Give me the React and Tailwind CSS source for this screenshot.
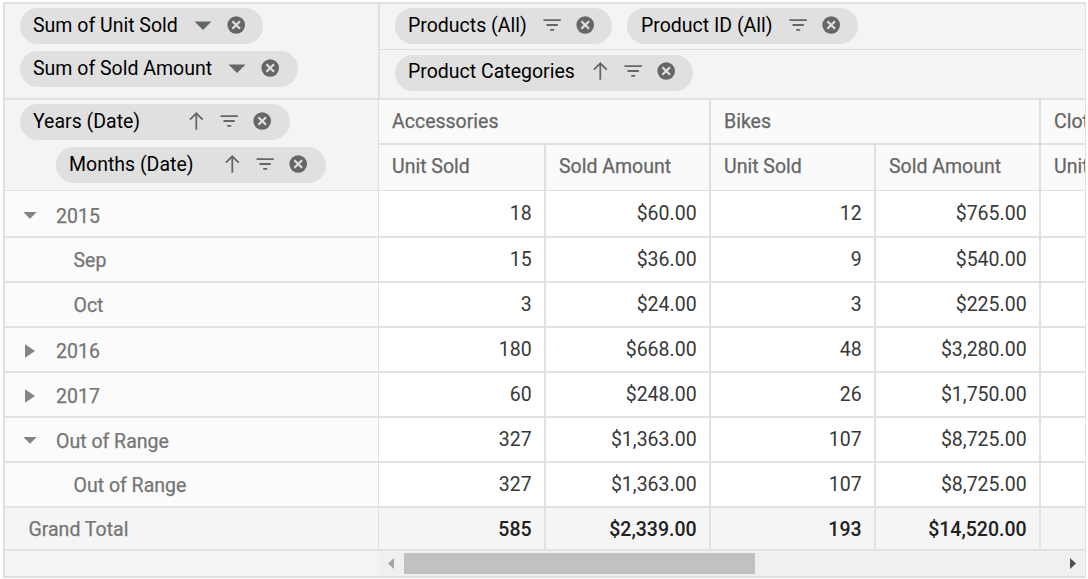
import React from 'react';
import clsx from 'clsx';

const rows = [
  { label: '2015', state: 'open', height: 'h-[47px]', pad: 'pt-[6px]', values: ['18', '$60.00', '12', '$765.00'] },
  { label: 'Sep', child: true, height: 'h-[45px]', pad: 'pt-0.5', values: ['15', '$36.00', '9', '$540.00'] },
  { label: 'Oct', child: true, height: 'h-[45px]', pad: 'pt-0.5', values: ['3', '$24.00', '3', '$225.00'] },
  { label: '2016', state: 'closed', height: 'h-[45px]', pad: 'pt-1', values: ['180', '$668.00', '48', '$3,280.00'] },
  { label: '2017', state: 'closed', height: 'h-[45px]', pad: 'pt-1', values: ['60', '$248.00', '26', '$1,750.00'] },
  { label: 'Out of Range', state: 'open', height: 'h-[45px]', pad: 'pt-1', values: ['327', '$1,363.00', '107', '$8,725.00'] },
  { label: 'Out of Range', child: true, height: 'h-[45px]', pad: 'pt-0.5', values: ['327', '$1,363.00', '107', '$8,725.00'] },
  { label: 'Grand Total', total: true, height: 'h-[43px]', pad: 'pt-0.5', values: ['585', '$2,339.00', '193', '$14,520.00'] },
];

const columnWidths = ['w-[167px]', 'w-[165px]', 'w-[165px]', 'w-[165px]'];

function Icon({ name }) {
  return (
    <svg width="18" height="18" viewBox="0 0 18 18" className="shrink-0 text-[#666666]" fill="currentColor">
      {name === 'dropdown' && <path d="M0.5 5.5h17L9 14z" />}
      {name === 'filter' && <path d="M0.5 3.2h17.3v1.9H0.5zM3.5 8.1h11.3v1.8H3.5zM7.2 13h4v1.8h-4z" />}
      {name === 'sort' && (
        <path d="M9.3 1.3v16.4M2.9 7.6l6.4-6.3 6.4 6.3" fill="none" stroke="currentColor" strokeWidth="1.8" />
      )}
      {name === 'remove' && (
        <>
          <circle cx="9.2" cy="9" r="8.8" />
          <path d="M5.4 5.2l7.6 7.6M13 5.2l-7.6 7.6" stroke="#e0e0e0" strokeWidth="2.2" />
        </>
      )}
    </svg>
  );
}

function Chip({ label, icons, className }) {
  return (
    <div className={clsx('flex h-9 shrink-0 items-center justify-between rounded-full bg-[#e0e0e0] text-black', className)}>
      <span className="pt-0.5">{label}</span>
      <span className="flex gap-[15px]">
        {icons.map((name) => (
          <Icon key={name} name={name} />
        ))}
      </span>
    </div>
  );
}

function Toggle({ state }) {
  return (
    <svg width="14" height="14" viewBox="0 0 14 14" className="mb-0.5 mr-[19px] shrink-0" fill="#848484">
      {state === 'open' ? <path d="M0.3 3h13.4L7 9.8z" /> : <path d="M2 0.3v13.4L12 7z" />}
    </svg>
  );
}

function HeaderCell({ children, className }) {
  return (
    <div className={clsx('flex shrink-0 items-center overflow-hidden border-[#e0e0e0] pl-[13px] text-[#666666] [-webkit-text-stroke:0.25px]', className)}>
      {children}
    </div>
  );
}

export default function App() {
  return (
    <div className="h-[579px] w-[1088px] overflow-hidden bg-white pl-[3px] pt-[2px] font-['Roboto',sans-serif] text-[19.5px] leading-7 whitespace-nowrap">
      <div className="flex h-[576px] w-[1083px] flex-col border-2 border-r border-[#e0e0e0] bg-[#f4f4f4]">
        {/* value, filter and column fields */}
        <div className="flex h-24 shrink-0 border-b-2 border-[#e0e0e0]">
          <div className="flex w-[375px] shrink-0 flex-col gap-[7px] border-r-2 border-[#e0e0e0] pl-[15px] pt-1">
            <Chip label="Sum of Unit Sold" icons={['dropdown', 'remove']} className="w-[243px] pl-[13px] pr-[18px] pb-0.5" />
            <Chip label="Sum of Sold Amount" icons={['dropdown', 'remove']} className="w-[278px] pl-[13px] pr-[19px] pb-0.5" />
          </div>
          <div className="flex min-w-0 flex-1 flex-col">
            <div className="flex h-[46px] gap-[15px] border-b border-[#e0e0e0] pl-[15px] pt-1">
              <Chip label="Products (All)" icons={['filter', 'remove']} className="w-[217px] pl-[13px] pr-[18px] pb-0.5" />
              <Chip label="Product ID (All)" icons={['filter', 'remove']} className="w-[231px] pl-[14px] pr-[18px] pb-0.5" />
            </div>
            <div className="pl-[15px] pt-[5px]">
              <Chip label="Product Categories" icons={['sort', 'filter', 'remove']} className="w-[298px] pl-[13px] pr-[18px] pb-1" />
            </div>
          </div>
        </div>

        {/* row fields and column headers */}
        <div className="flex h-[91px] shrink-0 border-b border-[#e0e0e0]">
          <div className="flex w-[374px] shrink-0 flex-col gap-[7px] border-r border-[#e0e0e0] pl-[15px] pt-1">
            <Chip label="Years (Date)" icons={['sort', 'filter', 'remove']} className="w-[270px] pl-[13px] pr-[19px] pb-0.5" />
            <Chip label="Months (Date)" icons={['sort', 'filter', 'remove']} className="ml-9 w-[270px] pl-[13px] pr-[19px] pb-0.5" />
          </div>
          <div className="min-w-0 flex-1 overflow-hidden bg-[#fafafa]">
            <div className="flex h-[45px] border-b-2 border-[#e0e0e0]">
              <HeaderCell className="w-[332px] border-r-2">Accessories</HeaderCell>
              <HeaderCell className="w-[330px] border-r-2">Bikes</HeaderCell>
              <HeaderCell className="w-[44px]">Clothing</HeaderCell>
            </div>
            <div className="flex h-[45px]">
              <HeaderCell className="w-[167px] border-r-2 pb-0.5">Unit Sold</HeaderCell>
              <HeaderCell className="w-[165px] border-r-2 pb-0.5">Sold Amount</HeaderCell>
              <HeaderCell className="w-[165px] border-r-2 pb-0.5">Unit Sold</HeaderCell>
              <HeaderCell className="w-[165px] border-r-2 pb-0.5">Sold Amount</HeaderCell>
              <HeaderCell className="w-[44px] pb-0.5">Unit Sold</HeaderCell>
            </div>
          </div>
        </div>

        {rows.map((row, i) => (
          <div key={i} className={clsx('flex shrink-0 border-b-2 border-[#e2e2e2]', row.height, row.total ? 'bg-[#f5f5f5]' : 'bg-white')}>
            <div
              className={clsx(
                'flex w-[374px] shrink-0 items-center border-r border-[#e0e0e0] text-[#757575] [-webkit-text-stroke:0.25px]',
                row.pad,
                row.child && 'bg-[#fbfbfb] pl-[68.5px]',
                row.total && 'pl-[23.5px]',
                row.state && 'bg-[#fbfbfb] pl-[18px]'
              )}
            >
              {row.state && <Toggle state={row.state} />}
              {row.label}
            </div>
            {row.values.map((value, j) => (
              <div
                key={j}
                className={clsx(
                  'flex shrink-0 items-center justify-end border-r-2 border-[#e2e2e2] pr-[12.4px]',
                  columnWidths[j],
                  row.total ? 'pt-0.5 font-medium text-[#212121]' : 'text-[#383838]'
                )}
              >
                {value}
              </div>
            ))}
          </div>
        ))}

        {/* horizontal scrollbar */}
        <div className="flex flex-1 bg-[#f4f4f4] pl-[374px]">
          <div className="flex flex-1 items-center bg-[#f0f0f0] pl-[9px] pr-[9px]">
            <svg width="6" height="11" viewBox="0 0 6 11" fill="#a3a3a3">
              <path d="M6 0v11L0 5.5z" />
            </svg>
            <div className="ml-2.5 h-[21px] w-[351px] bg-[#c1c1c1]" />
            <svg width="6" height="11" viewBox="0 0 6 11" fill="#505050" className="ml-auto">
              <path d="M0 0v11l6-5.5z" />
            </svg>
          </div>
        </div>
      </div>
    </div>
  );
}
